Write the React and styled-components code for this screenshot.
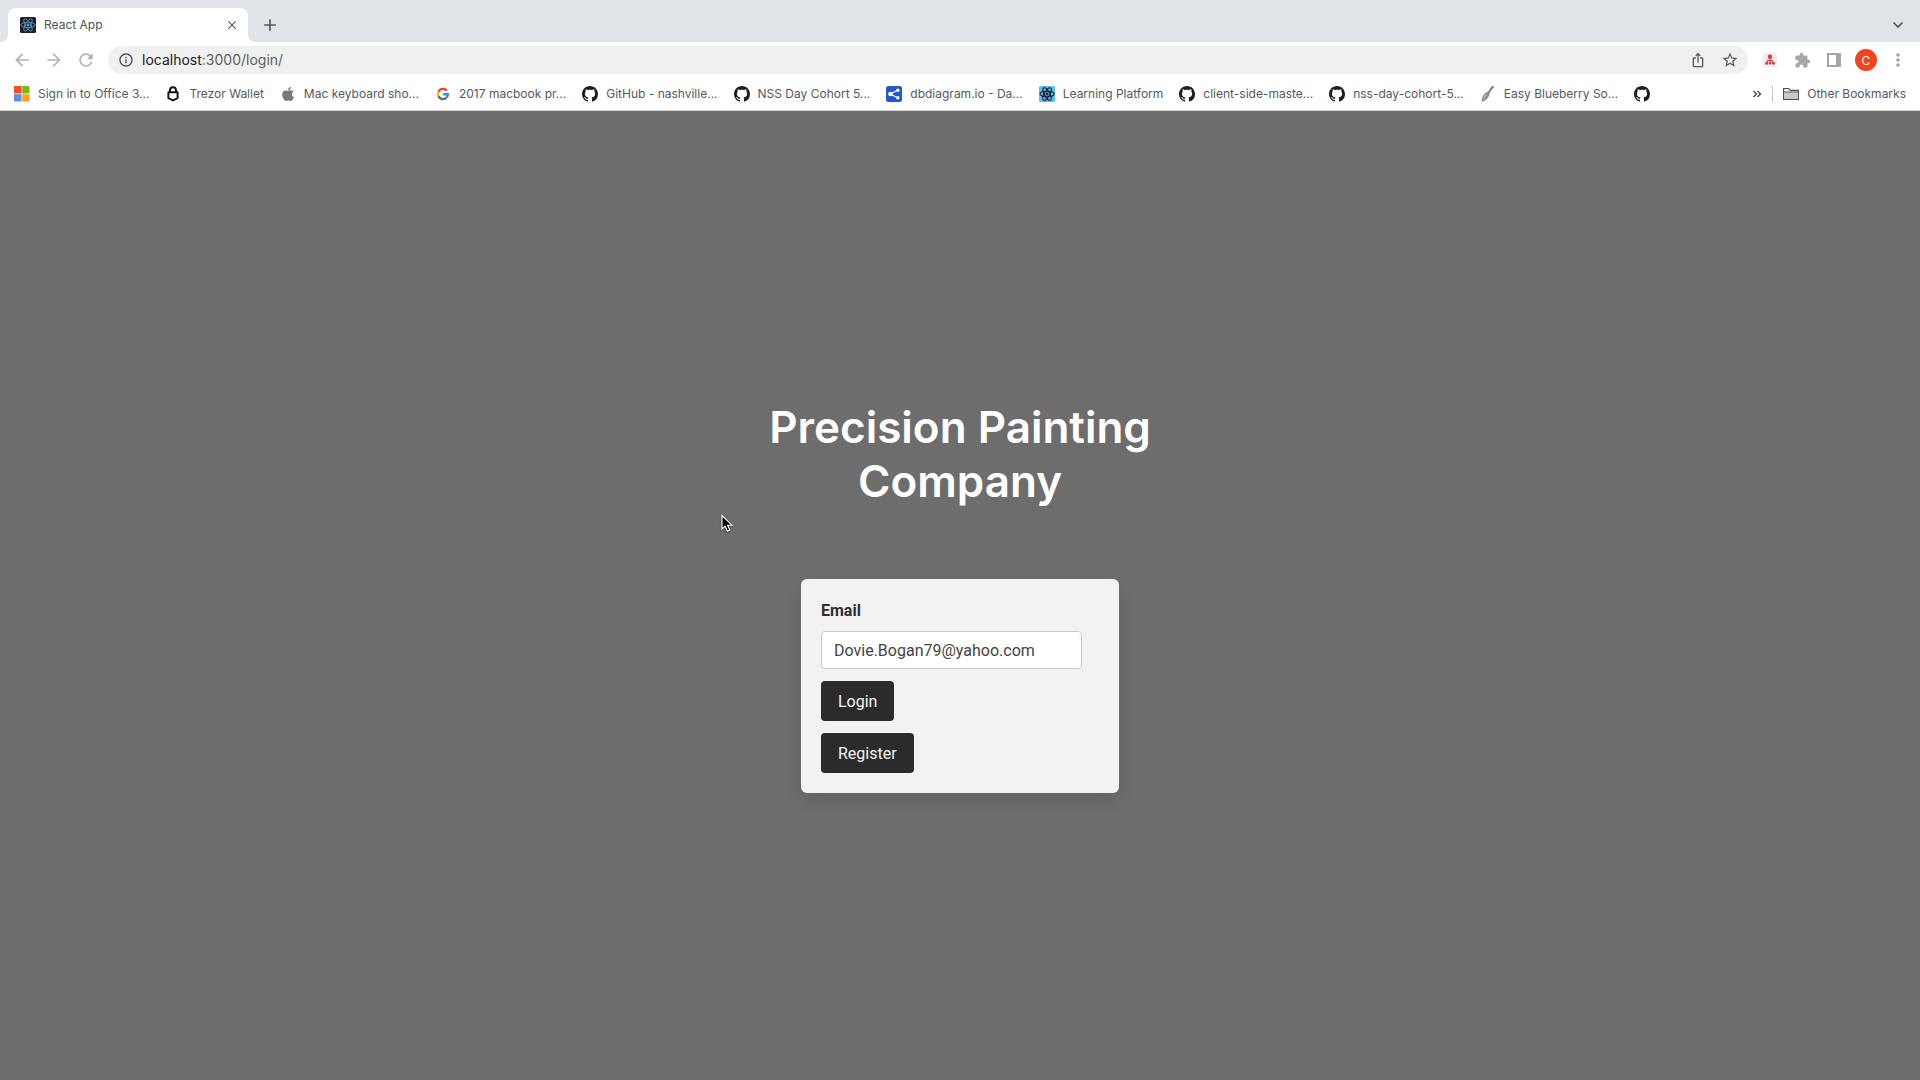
import React from "react";
import styled, { createGlobalStyle } from "styled-components";
import { FaApple } from "react-icons/fa";
import {
  MdAdd,
  MdArrowBack,
  MdArrowForward,
  MdClose,
  MdExtension,
  MdInfoOutline,
  MdIosShare,
  MdMoreVert,
  MdRefresh,
  MdStarBorder,
} from "react-icons/md";

const GlobalStyle = createGlobalStyle`
  *, *::before, *::after { box-sizing: border-box; }
  body {
    margin: 0;
    background: #6d6d6d;
    font-family: Inter, Roboto, sans-serif;
  }
  button, input { font: inherit; }
`;

const Window = styled.div`
  display: flex;
  flex-direction: column;
  min-height: 100vh;
`;

const TabStrip = styled.div`
  display: flex;
  align-items: flex-end;
  height: 42px;
  padding: 0 6px 0 8px;
  background: #e1e4e6;
`;

const Tab = styled.div`
  position: relative;
  display: flex;
  align-items: center;
  gap: 8px;
  width: 240px;
  height: 34px;
  padding: 0 6px 0 12px;
  border-radius: 8px 8px 0 0;
  background: #fff;
  color: #4f5357;
  font-size: 12px;
  line-height: 16px;

  &::before,
  &::after {
    content: "";
    position: absolute;
    bottom: 0;
    width: 8px;
    height: 8px;
  }
  &::before {
    right: 100%;
    background: radial-gradient(circle at 0 0, transparent 8px, #fff 8px);
  }
  &::after {
    left: 100%;
    background: radial-gradient(circle at 100% 0, transparent 8px, #fff 8px);
  }
`;

const TabTitle = styled.span`
  flex: 1;
`;

const IconButton = styled.button`
  display: grid;
  place-items: center;
  flex: none;
  width: ${(p) => p.$width || 32}px;
  height: ${(p) => p.$height || 32}px;
  padding: 0;
  border: 0;
  background: none;
  color: ${(p) => p.$color || "#55585c"};
`;

const StripActions = styled.div`
  display: flex;
  flex: 1;
  align-items: center;
  justify-content: space-between;
  height: 34px;
  padding-left: 6px;
`;

const Toolbar = styled.div`
  display: flex;
  align-items: center;
  height: 36px;
  padding: 0 6px;
  background: #fff;
`;

const Omnibox = styled.div`
  display: flex;
  flex: 1;
  align-items: center;
  gap: 8px;
  height: 28px;
  margin: 0 6px;
  padding: 0 2px 0 10px;
  border-radius: 14px;
  background: #f0f0f0;
  color: #4a4d50;
`;

const OmniboxActions = styled.div`
  display: flex;
`;

const Address = styled.div`
  flex: 1;
  color: #5c5f62;
  font-size: 14px;
  line-height: 20px;
`;

const Host = styled.span`
  color: #202124;
`;

const Avatar = styled.span`
  display: grid;
  place-items: center;
  width: 22px;
  height: 22px;
  border-radius: 50%;
  background: #f4431c;
  color: #fff;
  font-size: 12px;
`;

const BookmarksBar = styled.nav`
  display: flex;
  align-items: center;
  height: 33px;
  padding: 0 14px;
  border-bottom: 1px solid #d2d3d4;
  background: #fff;
`;

const BookmarkList = styled.div`
  display: flex;
  flex: 1;
  gap: 16px;
  overflow: hidden;
`;

const Bookmark = styled.a`
  display: flex;
  flex: none;
  align-items: center;
  gap: 8px;
  color: #55595d;
  font-size: 12px;
  line-height: 16px;
  text-decoration: none;
  white-space: nowrap;

  svg { flex: none; }
`;

const Divider = styled.span`
  width: 1px;
  height: 16px;
  margin: 0 10px 0 3px;
  background: #c4c6c8;
`;

const Page = styled.main`
  display: flex;
  flex: 1;
  flex-direction: column;
  align-items: center;
  justify-content: center;
  gap: 71px;
  padding-top: 2px;
  background: #6d6d6d;
`;

const Title = styled.h1`
  max-width: 400px;
  margin: 0;
  color: #fff;
  font-size: 44px;
  font-weight: 600;
  line-height: 54px;
  text-align: center;
`;

const Card = styled.form`
  display: flex;
  flex-direction: column;
  align-items: flex-start;
  gap: 12px;
  width: 318px;
  padding: 20px;
  border-radius: 6px;
  background: #f2f2f2;
  box-shadow: 0 8px 16px rgba(10, 10, 10, 0.1);
  font-family: Roboto, Inter, sans-serif;
  font-size: 16px;
`;

const Field = styled.div`
  display: flex;
  flex-direction: column;
  gap: 8px;
`;

const Label = styled.label`
  color: #2f2f2f;
  font-weight: 700;
  line-height: 24px;
`;

const Input = styled.input`
  width: 261px;
  height: 38px;
  padding: 0 12px;
  border: 1px solid #c6c8cb;
  border-radius: 4px;
  outline: 0;
  background: #fff;
  color: #434343;
`;

const Button = styled.button`
  height: 40px;
  padding: 0 17px;
  border: 0;
  border-radius: 4px;
  background: #2b2b2b;
  color: #f5f5f5;
`;

const Pointer = styled.svg`
  position: absolute;
  top: 514px;
  left: 721px;
  pointer-events: none;
  filter: drop-shadow(0 1px 1px rgba(0, 0, 0, 0.4));
`;

const ReactMark = ({ bg, fg, width }) => (
  <svg width="16" height="16" viewBox="0 0 32 32" aria-hidden="true">
    <rect width="32" height="32" rx="3" fill={bg} />
    <g fill="none" stroke={fg} strokeWidth={width}>
      <ellipse cx="16" cy="16" rx="14" ry="5.4" />
      <ellipse cx="16" cy="16" rx="14" ry="5.4" transform="rotate(60 16 16)" />
      <ellipse cx="16" cy="16" rx="14" ry="5.4" transform="rotate(120 16 16)" />
    </g>
    <circle cx="16" cy="16" r="2.8" fill={fg} />
  </svg>
);

const MicrosoftMark = () => (
  <svg width="16" height="16" viewBox="0 0 16 16" aria-hidden="true">
    <path fill="#f25022" d="M0 0h7.5v7.5H0z" />
    <path fill="#7cb518" d="M8.2 0h7.3v7.5H8.2z" />
    <path fill="#5b8de0" d="M0 8.2h7.5v7.3H0z" />
    <path fill="#f9a31a" d="M8.2 8.2h7.3v7.3H8.2z" />
  </svg>
);

const TrezorMark = () => (
  <svg width="16" height="16" viewBox="0 0 16 16" fill="none" stroke="#151515" strokeWidth="2" aria-hidden="true">
    <path d="M5 6V4.2C5 2.4 6.2 1.3 8 1.3s3 1.1 3 2.9V6" />
    <path d="M3.4 6.2h9.2v6L8 14.4l-4.6-2.2z" strokeLinejoin="round" />
  </svg>
);

const GoogleMark = () => (
  <svg width="16" height="16" viewBox="0 0 16 16" fill="none" strokeWidth="2.4" aria-hidden="true">
    <path stroke="#ea4335" d="M3.4 5.7A5 5 0 0 1 11.7 4.6" />
    <path stroke="#f6b60b" d="M3.4 5.7A5 5 0 0 0 3.4 10.3" />
    <path stroke="#5d6b62" d="M3.4 10.3A5 5 0 0 0 11.2 11.8" />
    <path stroke="#4285f4" d="M8.2 8.2h4.7A5 5 0 0 1 11.2 11.8" />
  </svg>
);

const GithubMark = () => (
  <svg width="16" height="16" viewBox="0 0 16 16" aria-hidden="true">
    <path
      fill="#1b1f23"
      d="M8 0C3.58 0 0 3.58 0 8c0 3.54 2.29 6.53 5.47 7.59.4.07.55-.17.55-.38 0-.19-.01-.82-.01-1.49-2.01.37-2.53-.49-2.69-.94-.09-.23-.48-.94-.82-1.13-.28-.15-.68-.52-.01-.53.63-.01 1.08.58 1.23.82.72 1.21 1.87.87 2.33.66.07-.52.28-.87.51-1.07-1.78-.2-3.64-.89-3.64-3.95 0-.87.31-1.59.82-2.15-.08-.2-.36-1.02.08-2.12 0 0 .67-.21 2.2.82.64-.18 1.32-.27 2-.27s1.36.09 2 .27c1.53-1.04 2.2-.82 2.2-.82.44 1.1.16 1.92.08 2.12.51.56.82 1.27.82 2.15 0 3.07-1.87 3.75-3.65 3.95.29.25.54.73.54 1.48 0 1.07-.01 1.93-.01 2.2 0 .21.15.46.55.38A8.01 8.01 0 0 0 16 8c0-4.42-3.58-8-8-8z"
    />
  </svg>
);

const DiagramMark = () => (
  <svg width="16" height="16" viewBox="0 0 16 16" aria-hidden="true">
    <rect width="16" height="16" rx="2.5" fill="#2356d2" />
    <path d="M11.3 4.2 4.6 8l6.7 3.8" fill="none" stroke="#fff" strokeWidth="1.3" />
    <circle cx="4.5" cy="8" r="2.3" fill="#fff" />
    <circle cx="11.8" cy="4.2" r="1.7" fill="#fff" />
    <circle cx="11.8" cy="11.8" r="1.7" fill="#fff" />
  </svg>
);

const SpoonMark = () => (
  <svg width="16" height="16" viewBox="0 0 16 16" aria-hidden="true">
    <path d="M12.8.8 7.6 8" stroke="#8b625e" strokeWidth="1.8" strokeLinecap="round" />
    <path d="M8.7 5.8c1.2 1 1.100 3-.2 4.900-1.500 2.200-4.300 4.800-6.500 4.900-1-1.500.2-4.900 1.900-7 1.500-2 3.400-3.500 4.800-2.800z" fill="#8b8889" />
    <path d="M6.600 8.400c-1.800 1.200-2.800 3-3.300 4.700" stroke="#c9c6c6" strokeWidth="1.2" fill="none" />
  </svg>
);

const FolderMark = () => (
  <svg width="16" height="16" viewBox="0 0 16 16" aria-hidden="true">
    <path d="M.6 13.4V2.5h5.2l1.4 1.8h8.2v9.1z" fill="#fff" stroke="#4b4e51" strokeWidth="1.2" />
    <path d="M1.2 6.3h13.6v6.5H1.2z" fill="#c8c9ca" />
    <path d="M.6 6h14.8" stroke="#4b4e51" />
  </svg>
);

const SitemapMark = () => (
  <svg width="14" height="14" viewBox="0 0 14 14" aria-hidden="true">
    <rect width="14" height="14" rx="1" fill="#f1ecec" />
    <g fill="#dc3d47">
      <circle cx="7" cy="3.8" r="2.3" />
      <circle cx="3.6" cy="10.3" r="1.5" />
      <circle cx="7" cy="10.3" r="1.3" />
      <circle cx="10.4" cy="10.3" r="1.5" />
    </g>
    <path d="M7 5v5M3.600 10l1-2.400h4.800l1 2.400" fill="none" stroke="#dc3d47" strokeWidth="1.2" />
  </svg>
);

const PanelMark = () => (
  <svg width="14" height="14" viewBox="0 0 14 14" aria-hidden="true">
    <path d="M1 1h12v12H1z" fill="none" stroke="#a5a6a8" strokeWidth="2" />
    <path d="M9 0h5v14H9z" fill="#a5a6a8" />
  </svg>
);

const ChevronMark = () => (
  <svg width="12" height="12" viewBox="0 0 12 12" fill="none" stroke="currentColor" strokeWidth="1.7" aria-hidden="true">
    <path d="m1.5 3.5 4.5 4.5 4.5-4.5" />
  </svg>
);

const OverflowMark = () => (
  <svg width="10" height="8" viewBox="0 0 10 8" fill="none" stroke="#45484b" strokeWidth="1.4" aria-hidden="true">
    <path d="m1.5 1 3 3-3 3M5.5 1l3 3-3 3" />
  </svg>
);

const bookmarks = [
  { label: "Sign in to Office 3...", icon: <MicrosoftMark /> },
  { label: "Trezor Wallet", icon: <TrezorMark /> },
  { label: "Mac keyboard sho...", icon: <FaApple size={16} color="#77797b" viewBox="-48 0 480 512" /> },
  { label: "2017 macbook pr...", icon: <GoogleMark /> },
  { label: "GitHub - nashville...", icon: <GithubMark /> },
  { label: "NSS Day Cohort 5...", icon: <GithubMark /> },
  { label: "dbdiagram.io - Da...", icon: <DiagramMark /> },
  { label: "Learning Platform", icon: <ReactMark bg="#5fbdf0" fg="#16202c" width={2.2} /> },
  { label: "client-side-maste...", icon: <GithubMark /> },
  { label: "nss-day-cohort-5...", icon: <GithubMark /> },
  { label: "Easy Blueberry So...", icon: <SpoonMark /> },
  { label: "", icon: <GithubMark /> },
];

export default function App() {
  return (
    <Window>
      <GlobalStyle />
      <TabStrip>
        <Tab>
          <ReactMark bg="#1d1f24" fg="#5d9fd0" width={1.6} />
          <TabTitle>React App</TabTitle>
          <IconButton $width={20} $height={20} aria-label="Close tab">
            <MdClose size={14} />
          </IconButton>
        </Tab>
        <StripActions>
          <IconButton aria-label="New tab">
            <MdAdd size={20} />
          </IconButton>
          <IconButton aria-label="Search tabs">
            <ChevronMark />
          </IconButton>
        </StripActions>
      </TabStrip>

      <Toolbar>
        <IconButton $color="#b0b2b4" aria-label="Back">
          <MdArrowBack size={20} />
        </IconButton>
        <IconButton $color="#b0b2b4" aria-label="Forward">
          <MdArrowForward size={20} />
        </IconButton>
        <IconButton $color="#b0b2b4" aria-label="Reload">
          <MdRefresh size={20} />
        </IconButton>
        <Omnibox>
          <MdInfoOutline size={16} />
          <Address>
            <Host>localhost</Host>:3000/login/
          </Address>
          <OmniboxActions>
            <IconButton $height={28} aria-label="Share">
              <MdIosShare size={16} />
            </IconButton>
            <IconButton $height={28} aria-label="Bookmark this page">
              <MdStarBorder size={18} />
            </IconButton>
          </OmniboxActions>
        </Omnibox>
        <IconButton aria-label="Sitemap extension">
          <SitemapMark />
        </IconButton>
        <IconButton $color="#a5a6a8" aria-label="Extensions">
          <MdExtension size={17} />
        </IconButton>
        <IconButton aria-label="Side panel">
          <PanelMark />
        </IconButton>
        <IconButton aria-label="Profile">
          <Avatar>C</Avatar>
        </IconButton>
        <IconButton $color="#9b9da0" aria-label="Menu">
          <MdMoreVert size={20} />
        </IconButton>
      </Toolbar>

      <BookmarksBar>
        <BookmarkList>
          {bookmarks.map(({ label, icon }, i) => (
            <Bookmark href="#" key={i} aria-label={label || "GitHub"}>
              {icon}
              {label && <span>{label}</span>}
            </Bookmark>
          ))}
        </BookmarkList>
        <IconButton $width={24} aria-label="More bookmarks">
          <OverflowMark />
        </IconButton>
        <Divider />
        <Bookmark href="#">
          <FolderMark />
          Other Bookmarks
        </Bookmark>
      </BookmarksBar>

      <Page>
        <Title>Precision Painting Company</Title>
        <Card onSubmit={(e) => e.preventDefault()}>
          <Field>
            <Label htmlFor="email">Email</Label>
            <Input id="email" type="email" defaultValue="Dovie.Bogan79@yahoo.com" />
          </Field>
          <Button type="submit">Login</Button>
          <Button type="button">Register</Button>
        </Card>
      </Page>

      <Pointer width="13" height="19" viewBox="0 0 13 19" aria-hidden="true">
        <path
          d="M1 1.5v13.5l3.2-2.9 2.2 5 2.4-1-2.2-4.900h4.400z"
          fill="#000"
          stroke="#fff"
          strokeWidth="1.1"
        />
      </Pointer>
    </Window>
  );
}
